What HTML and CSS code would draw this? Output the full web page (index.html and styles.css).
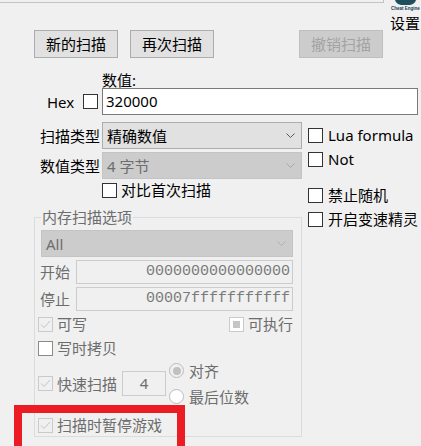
FILE: index.html
```html
<!DOCTYPE html>
<html lang="zh-CN">
<head>
<meta charset="UTF-8">
<meta name="viewport" content="width=device-width, initial-scale=1.0">
<title>扫描</title>
<link rel="stylesheet" href="styles.css">
</head>
<body>

<div class="top">
  <div class="list-edge"></div>
  <div class="settings">
    <svg class="logo" width="31" height="11" viewBox="0 0 31 11">
      <path d="M5 0 H26 Q25 4 20 5 H11 Q6 4 5 0Z" fill="#1d4f5c"/>
      <text x="15.5" y="10" font-size="4.5" font-weight="bold" text-anchor="middle" fill="#123e55" font-family="Liberation Sans">Cheat Engine</text>
    </svg>
    <div class="settings-label">设置</div>
  </div>
</div>

<div class="btn-row">
  <button class="btn">新的扫描</button>
  <button class="btn">再次扫描</button>
  <button class="btn undo" disabled>撤销扫描</button>
</div>

<div class="value-label">数值:</div>
<div class="hex-row">
  <span class="hex">Hex</span>
  <span class="cb"></span>
  <div class="text-input">320000</div>
</div>

<div class="middle">
  <div class="left-col">
    <div class="field-row">
      <span class="field-label">扫描类型</span>
      <div class="select">
        <span>精确数值</span>
        <svg class="chevron" width="9" height="5" viewBox="0 0 9 5"><path d="M0.5 0.5 L4.5 4.5 L8.5 0.5" fill="none" stroke="#5a5a5a"/></svg>
      </div>
    </div>
    <div class="field-row">
      <span class="field-label">数值类型</span>
      <div class="select disabled">
        <span>4 字节</span>
        <svg class="chevron" width="9" height="5" viewBox="0 0 9 5"><path d="M0.5 0.5 L4.5 4.5 L8.5 0.5" fill="none" stroke="#a8a8a8"/></svg>
      </div>
    </div>
    <div class="check compare"><span class="cb"></span>对比首次扫描</div>

    <fieldset class="mem-group">
      <legend>内存扫描选项</legend>
      <div class="select disabled mem-select">
        <span>All</span>
        <svg class="chevron" width="9" height="5" viewBox="0 0 9 5"><path d="M0.5 0.5 L4.5 4.5 L8.5 0.5" fill="none" stroke="#b0b0b0"/></svg>
      </div>
      <div class="range-row">
        <span class="range-label">开始</span>
        <div class="range-input">0000000000000000</div>
      </div>
      <div class="range-row">
        <span class="range-label">停止</span>
        <div class="range-input">00007fffffffffff</div>
      </div>

      <div class="prot-row">
        <div class="check dim">
          <span class="cb off"><svg width="11" height="9" viewBox="0 0 11 9"><path d="M1 4.5 L4 7.5 L10 1" fill="none" stroke="#c4c4c4"/></svg></span>可写
        </div>
        <div class="check dim">
          <span class="cb off white"><span class="mixed"></span></span>可执行
        </div>
      </div>
      <div class="check dim copy-row"><span class="cb grey"></span>写时拷贝</div>

      <div class="fast-row">
        <div class="check dim">
          <span class="cb off"><svg width="11" height="9" viewBox="0 0 11 9"><path d="M1 4.5 L4 7.5 L10 1" fill="none" stroke="#c4c4c4"/></svg></span>快速扫描
        </div>
        <div class="fast-input">4</div>
        <div class="radios">
          <div class="radio-item"><span class="radio on"><span class="dot"></span></span>对齐</div>
          <div class="radio-item"><span class="radio"></span>最后位数</div>
        </div>
      </div>

      <div class="check dim pause-row">
        <span class="cb off"><svg width="11" height="9" viewBox="0 0 11 9"><path d="M1 4.5 L4 7.5 L10 1" fill="none" stroke="#c4c4c4"/></svg></span>扫描时暂停游戏
      </div>
    </fieldset>
  </div>

  <div class="right-col">
    <div class="check"><span class="cb"></span>Lua formula</div>
    <div class="check"><span class="cb"></span>Not</div>
    <div class="check gap-big"><span class="cb"></span>禁止随机</div>
    <div class="check"><span class="cb"></span>开启变速精灵</div>
  </div>
</div>

<div class="highlight"></div>

</body>
</html>
```

FILE: styles.css
```css
body { margin: 0; width: 421px; height: 446px; overflow: hidden; position: relative;
  background-color: #f0f0f0; color: #000;
  font-family: "Noto Sans", "Noto Sans CJK SC", sans-serif; font-size: 15px; line-height: 16px; }

/* top strip */
.top { display: flex; height: 30px; }
.list-edge { width: 384px; height: 3px; box-sizing: border-box; border-right: 1px solid #c3c3c3; border-bottom: 1px solid #c3c3c3; }
.settings { margin-left: 6px; width: 31px; }
.logo { display: block; }
.settings-label { margin-top: 4px; line-height: 16px; white-space: nowrap; }

/* buttons */
.btn-row { display: flex; gap: 12px; padding-left: 34px; width: 349px; }
.btn { width: 84px; height: 28px; padding: 0; border: 1px solid #adadad; background-color: #e1e1e1;
  font: inherit; color: #000; line-height: 16px; }
.btn.undo { margin-left: auto; background-color: #cccccc; border-color: #bfbfbf; color: #a3a3a3; }

/* value input */
.value-label { margin-top: 15px; padding-left: 102px; line-height: 15px; }
.hex-row { display: flex; align-items: center; height: 27px; padding-left: 47px; }
.hex { width: 36px; }
.text-input { margin-left: 4px; width: 316px; height: 27px; box-sizing: border-box; border: 1px solid #7a7a7a;
  background-color: #fff; padding-left: 3px; line-height: 25px; }

/* checkboxes */
.cb { width: 15px; height: 15px; box-sizing: border-box; border: 1px solid #333; background-color: #fff; flex: none;
  display: flex; align-items: center; justify-content: center; }
.cb.off { border-color: #cacaca; background-color: #f0f0f0; }
.cb.white { background-color: #fff; }
.cb.grey { border-color: #8a8a8a; }
.cb svg { display: block; }
.mixed { width: 7px; height: 7px; background-color: #c6c6c6; }
.check { display: flex; align-items: center; gap: 4px; height: 16px; white-space: nowrap; }
.dim { color: #6d6d6d; }

/* middle section */
.middle { display: flex; margin-top: 7px; }
.left-col { width: 302px; }
.right-col { margin-left: 6px; padding-top: 5px; }
.right-col .check { gap: 5px; margin-bottom: 8px; }
.right-col .gap-big { margin-top: 20px; }

.field-row { display: flex; height: 27px; margin-bottom: 3px; align-items: center; }
.field-label { width: 100px; margin-right: 2px; text-align: right; }
.select { flex: 1; height: 27px; box-sizing: border-box; border: 1px solid #adadad; background-color: #e1e1e1;
  display: flex; align-items: center; justify-content: space-between; padding: 0 6px 0 4px; }
.select.disabled { background-color: #cccccc; border-color: #c4c4c4; color: #6d6d6d; }
.chevron { display: block; }
.compare { margin-top: 3px; margin-left: 102px; }

/* memory group */
.mem-group { margin: 10px 0 0 34px; width: 268px; box-sizing: border-box; min-width: 0;
  padding: 0 8px 3px 0; border: 1px solid #dcdcdc; }
.mem-group legend { margin-left: 6px; padding: 0 1px; line-height: 18px; color: #6d6d6d; }
.mem-select { margin: 4px 0 0 6px; flex: none; width: 252px; }
.range-row { display: flex; height: 24px; margin-top: 3px; align-items: center; }
.range-label { width: 36px; padding-left: 5px; color: #6d6d6d; }
.range-input { flex: 1; height: 24px; box-sizing: border-box; border: 1px solid #cccccc; text-align: right;
  padding-right: 2px; font-family: "Liberation Mono", monospace; font-size: 15px; line-height: 22px; color: #7a7a7a; }
.prot-row { display: flex; justify-content: space-between; margin: 5px 0 0 3px; }
.copy-row { margin: 8px 0 0 3px; }
.fast-row { display: flex; align-items: center; height: 41px; margin: 7px 0 0 3px; }
.fast-input { width: 44px; height: 25px; margin-left: 5px; box-sizing: border-box; border: 1px solid #cccccc;
  text-align: center; line-height: 23px; color: #6d6d6d; }
.radios { display: flex; flex-direction: column; gap: 10px; margin-left: 3px; }
.radio-item { display: flex; align-items: center; gap: 5px; height: 16px; color: #6d6d6d; }
.radio { width: 15px; height: 15px; box-sizing: border-box; border: 1px solid #bcbcbc; border-radius: 50%;
  background-color: #fff; display: flex; align-items: center; justify-content: center; }
.radio.on { background-color: #f0f0f0; }
.dot { width: 8px; height: 8px; border-radius: 50%; background-color: #c0c0c0; }
.pause-row { margin: 13px 0 0 3px; }

/* red annotation frame */
.highlight { position: absolute; left: 14px; top: 405px; width: 171px; height: 49px; box-sizing: border-box;
  border: 8px solid #ec1c24; }
```
